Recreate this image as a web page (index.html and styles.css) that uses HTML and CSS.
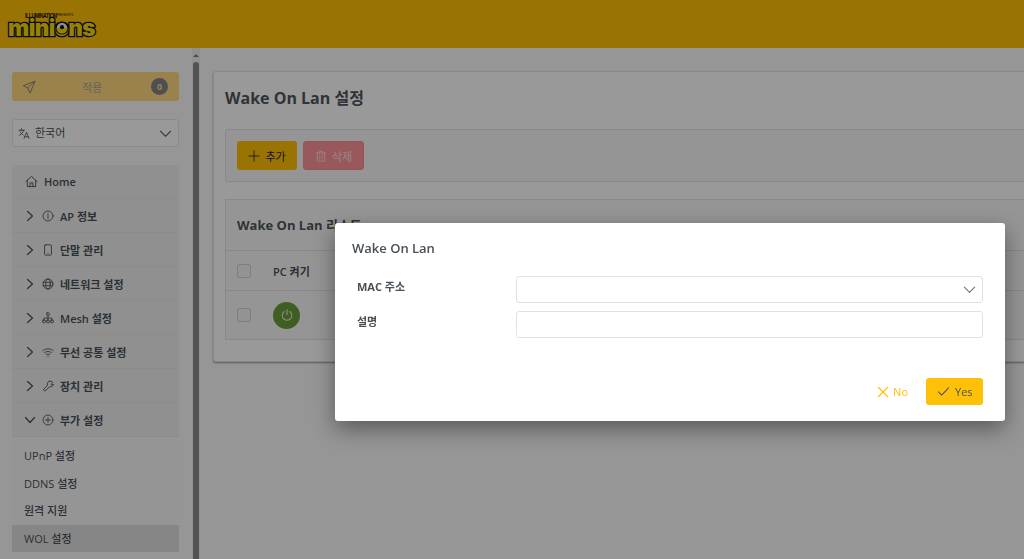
FILE: index.html
```html
<!DOCTYPE html>
<html lang="ko">
<head>
<meta charset="utf-8">
<title>Wake On Lan 설정</title>
<link rel="stylesheet" href="styles.css">
</head>
<body>
<header class="topbar">
  <div class="logo">
    <div class="logo-top"><span class="logo-ill">ILLUMINATION</span><span class="logo-pre">PRESENTS</span></div>
    <div class="logo-name">mini<span class="logo-o">o<svg class="logo-eye" viewBox="0 0 16 16"><circle cx="8" cy="8" r="7.5" fill="#111"/><path d="M1.500 8a6.500 6.500 0 0 0 13 0z" fill="#f5d90a"/><path d="M2 8a6 6 0 0 1 12 0z" fill="#eee"/><circle cx="8" cy="7" r="2.300" fill="#111"/></svg></span>ns</div>
  </div>
</header>
<div class="shell">
  <aside class="sidebar">
    <button class="apply">
      <svg class="ic apply-ic" viewBox="0 0 16 16"><path d="M14.500 1.500 1.500 6.500l5 2.500 2.500 5.500zM6.500 9l8-7.500"/></svg>
      <span class="apply-label">적용</span>
      <span class="apply-badge">0</span>
    </button>
    <div class="lang">
      <svg class="lang-ic" viewBox="0 0 16 16"><path d="M1 4h7M4.300 2v2M6.800 4c-.6 3-2.500 5-5.300 6.200M2.800 6c.8 1.700 2 3 3.700 3.800M7.500 14l3-7.500 3 7.500M8.500 12h4"/></svg>
      <span class="lang-text">한국어</span>
      <svg class="ic lang-chev" viewBox="0 0 14 14"><path d="M1.500 4.500 7 10l5.500-5.500"/></svg>
    </div>
    <nav class="menu">
      <div class="item home">
        <svg class="ic" viewBox="0 0 14 14"><path d="M1 7 7 1.500 13 7M2.500 5.800V12.500h9V5.800M5.500 12.500V8.500h3v4"/></svg>
        <span class="home-label">Home</span>
      </div>
      <div class="item">
        <svg class="chev" viewBox="0 0 10 12"><path d="M2.500 1.500 7.500 6l-5 4.500"/></svg>
        <svg class="ic" viewBox="0 0 14 14"><circle cx="7" cy="7" r="5.800"/><path d="M7 6.200v4M7 3.800v1"/></svg>
        <span>AP 정보</span>
      </div>
      <div class="item">
        <svg class="chev" viewBox="0 0 10 12"><path d="M2.500 1.500 7.500 6l-5 4.500"/></svg>
        <svg class="ic" viewBox="0 0 14 14"><rect x="3" y="1" width="8" height="12" rx="1"/><path d="M6.800 10.800h.5"/></svg>
        <span>단말 관리</span>
      </div>
      <div class="item">
        <svg class="chev" viewBox="0 0 10 12"><path d="M2.500 1.500 7.500 6l-5 4.500"/></svg>
        <svg class="ic" viewBox="0 0 14 14"><circle cx="7" cy="7" r="5.800"/><ellipse cx="7" cy="7" rx="2.600" ry="5.800"/><path d="M1.500 5h11M1.500 9h11"/></svg>
        <span>네트워크 설정</span>
      </div>
      <div class="item">
        <svg class="chev" viewBox="0 0 10 12"><path d="M2.500 1.500 7.500 6l-5 4.500"/></svg>
        <svg class="ic" viewBox="0 0 14 14"><rect x="5.500" y="1" width="3" height="3" rx=".5"/><rect x=".8" y="9.500" width="3" height="3" rx=".5"/><rect x="5.500" y="9.500" width="3" height="3" rx=".5"/><rect x="10.200" y="9.500" width="3" height="3" rx=".5"/><path d="M7 4v5.500M2.300 9.500V7h9.400v2.500"/></svg>
        <span>Mesh 설정</span>
      </div>
      <div class="item">
        <svg class="chev" viewBox="0 0 10 12"><path d="M2.500 1.500 7.500 6l-5 4.500"/></svg>
        <svg class="ic" viewBox="0 0 14 14"><path d="M1 5.500c3.400-3 8.600-3 12 0M3 7.800c2.300-2 5.700-2 8 0M5 10c1.200-1 2.800-1 4 0M6.800 12h.4"/></svg>
        <span>무선 공통 설정</span>
      </div>
      <div class="item">
        <svg class="chev" viewBox="0 0 10 12"><path d="M2.500 1.500 7.500 6l-5 4.500"/></svg>
        <svg class="ic" viewBox="0 0 14 14"><path d="M8.500 1.500a3.500 3.500 0 0 1 4.200 1.200L10.500 5 12 6.200l1.200-1.500a3.500 3.500 0 0 1-4.500 3.300L3.500 13 1.500 11.500 6.300 6A3.500 3.500 0 0 1 8.500 1.500z"/></svg>
        <span>장치 관리</span>
      </div>
      <div class="item">
        <svg class="chev chev-down" viewBox="0 0 12 10"><path d="M1.500 2.500 6 7.500l4.500-5"/></svg>
        <svg class="ic" viewBox="0 0 14 14"><circle cx="7" cy="7" r="5.800"/><path d="M7 4v6M4 7h6"/></svg>
        <span>부가 설정</span>
      </div>
      <div class="subs">
        <div class="sub">UPnP 설정</div>
        <div class="sub">DDNS 설정</div>
        <div class="sub">원격 지원</div>
        <div class="sub current">WOL 설정</div>
      </div>
    </nav>
  </aside>
  <div class="scroller">
    <div class="scroll-arrow"></div>
    <div class="scroll-thumb"></div>
  </div>
  <main class="main">
    <section class="card">
      <h1 class="card-title">Wake On Lan 설정</h1>
      <div class="toolbar">
        <button class="btn btn-add">
          <svg class="btn-ic" viewBox="0 0 14 14"><path d="M7 1v12M1 7h12"/></svg>
          <span>추가</span>
        </button>
        <button class="btn btn-del">
          <svg class="btn-ic" viewBox="0 0 14 14"><path d="M1.500 3.500h11M5 3.500V1.500h4v2M2.800 3.500v9.500h8.400V3.500M5.600 6v4.500M8.400 6v4.500"/></svg>
          <span>삭제</span>
        </button>
      </div>
      <div class="list">
        <h2 class="list-title">Wake On Lan 리스트</h2>
        <div class="row row-head">
          <span class="check"></span>
          <span class="col-pc">PC 켜기</span>
        </div>
        <div class="row row-body">
          <span class="check"></span>
          <span class="power">
            <svg viewBox="0 0 14 14"><path d="M7 1.500v5M4.200 3.500a4.800 4.800 0 1 0 5.600 0"/></svg>
          </span>
        </div>
      </div>
    </section>
  </main>
</div>
<div class="mask"></div>
<div class="dialog">
  <div class="dialog-title">Wake On Lan</div>
  <div class="field">
    <label class="field-label">MAC 주소</label>
    <div class="control">
      <svg class="control-chev" viewBox="0 0 14 14"><path d="M1.500 4.500 7 10l5.500-5.500"/></svg>
    </div>
  </div>
  <div class="field">
    <label class="field-label">설명</label>
    <div class="control"></div>
  </div>
  <div class="dialog-foot">
    <button class="link-no">
      <svg viewBox="0 0 12 12"><path d="M1.500 1.500l9 9M10.500 1.500l-9 9"/></svg>
      <span>No</span>
    </button>
    <button class="btn-yes">
      <svg viewBox="0 0 14 12"><path d="M1.500 6.500 5 10l7.500-8"/></svg>
      <span>Yes</span>
    </button>
  </div>
</div>
</body>
</html>
```

FILE: styles.css
```css
* { box-sizing: border-box; }
html, body { margin: 0; height: 100%; overflow: hidden; }
body {
  font-family: "Open Sans", "Noto Sans CJK KR", sans-serif;
  font-size: 11px;
  color: #495057;
  background: #fbfbfb;
}
button { font-family: inherit; cursor: pointer; }
svg { display: block; fill: none; stroke: currentColor; stroke-linecap: round; stroke-linejoin: round; }

.topbar { height: 48px; background: #ffc107; padding: 12px 0 0 8px; }
.logo { width: 90px; height: 28px; }
.logo-top { display: flex; align-items: flex-end; margin-left: 17px; height: 7px; color: #111; line-height: 7px; }
.logo-ill {
  display: inline-block; margin-right: -8px; transform: scaleX(.8); transform-origin: left center;
  font-family: "Liberation Sans", sans-serif; font-size: 6.500px; font-weight: 700; letter-spacing: -.55px; white-space: nowrap;
}
.logo-pre { font-family: "Liberation Sans", sans-serif; font-size: 3px; letter-spacing: .1px; white-space: nowrap; }
.logo-name {
  font-family: "Inter", sans-serif;
  font-size: 22.500px;
  line-height: 18px;
  font-weight: 900;
  letter-spacing: -.6px;
  white-space: nowrap;
  color: #f5d90a;
  -webkit-text-stroke: 2.500px #111;
  paint-order: stroke fill;
}
.logo-o { position: relative; }
.logo-eye { position: absolute; left: 0; top: 7px; width: 14px; height: 14px; stroke: none; }

.shell { display: flex; height: 511px; }
.sidebar { width: 192px; flex: none; padding: 24px 13px 0 12px; overflow: hidden; background: #fbfbfb; }

.apply {
  display: flex; align-items: center; width: 100%; height: 29px; padding: 0 11px 0 10px;
  border: 0; border-radius: 3px; background: #ffd97d; color: #a9a698; font-size: 11px;
}
.apply-ic { width: 14px; height: 14px; stroke-width: 1; color: #7d7d7d; }
.apply-label { flex: 1; text-align: center; margin-right: 3px; }
.apply-badge {
  width: 17px; height: 17px; border-radius: 50%; background: #80848e; color: #ffd97d;
  font-size: 9px; font-weight: 700; line-height: 17px; text-align: center;
}

.lang {
  display: flex; align-items: center; height: 28px; margin: 18px 0; padding: 0 6px 0 5px;
  background: #fff; border: 1px solid #e6e6e6; border-radius: 3px;
}
.lang-ic { width: 13px; height: 13px; stroke-width: 1; flex: none; }
.lang-text { flex: 1; margin-left: 4px; padding-bottom: 2px; font-size: 11px; }
.lang-chev { width: 13px; height: 13px; stroke-width: 1.100; color: #495057; }

.menu { display: flex; flex-direction: column; background: #f1f1f1; }
.item {
  display: flex; align-items: center; height: 34px; padding-left: 13px; gap: 6px;
  border-bottom: 1px solid #e8e8e8; font-weight: 600; font-size: 11px;
}
.item .ic { width: 12px; height: 12px; stroke-width: 1; flex: none; color: #495057; }
.item.home .ic { width: 13px; height: 13px; }
.chev { width: 10px; height: 12px; stroke-width: 1.200; flex: none; margin-right: 1px; }
.chev-down { width: 12px; height: 10px; margin-left: -1px; margin-right: 0; }
.subs { padding-top: 5px; background: #f9f9f9; }
.sub { height: 27.500px; line-height: 27.500px; padding-left: 12px; font-size: 11px; font-weight: 500; }
.sub.current { background: #e0e0e0; }

.scroller { position: relative; width: 8px; flex: none; background: #f0f0f0; }
.scroll-arrow {
  position: absolute; left: 1px; top: 6px;
  border-left: 3px solid transparent; border-right: 3px solid transparent; border-bottom: 3px solid #808080;
}
.scroll-thumb { position: absolute; left: 1px; top: 14px; bottom: -20px; width: 6px; border-radius: 3px; background: #8a8a8a; }

.main { flex: 1; min-width: 0; padding: 23px 0 0 13px; overflow: hidden; }
.card {
  width: 830px; height: 291px; padding: 0 11px; background: #fff;
  border: 1px solid #e3e3e3; border-radius: 3px; box-shadow: 0 1px 2px rgba(0,0,0,.4);
}
.card-title { margin: 0; height: 57px; line-height: 53px; font-size: 16px; font-weight: 700; color: #50565c; }
.toolbar {
  display: flex; gap: 6px; height: 53px; padding: 11px; margin-bottom: 17px;
  background: #f8f9fa; border: 1px solid #e3e3e3; border-radius: 3px;
}
.btn {
  display: flex; align-items: center; justify-content: center; gap: 5px; height: 29px; padding: 0;
  border: 0; border-radius: 3px; font-size: 11px; white-space: nowrap;
}
.btn-ic { width: 12px; height: 12px; stroke-width: 1; }
.btn-add { width: 60px; background: #ffc107; color: #212529; }
.btn-del { width: 61px; background: #ff9399; color: #ffe0e0; border: 1px solid #fb8c93; }
.list { background: #f8f9fa; border: 1px solid #e3e3e3; }
.list-title { margin: 0; height: 50px; line-height: 50px; padding-left: 11px; font-size: 13px; font-weight: 700; color: #50565c; }
.row { display: flex; align-items: center; padding-left: 11px; border-top: 1px solid #e3e3e3; }
.row-head { height: 40px; font-weight: 600; font-size: 11px; }
.row-body { height: 49px; background: #f8f9fa; }
.check { width: 14px; height: 14px; background: #f5f5f5; border: 1px solid #ced4da; border-radius: 2px; flex: none; }
.col-pc { margin-left: 22px; }
.power {
  display: flex; align-items: center; justify-content: center; width: 27px; height: 27px; margin-left: 22px;
  border-radius: 50%; background: #689f38; color: #e4f0d8;
}
.power svg { width: 14px; height: 14px; stroke-width: 1.100; }

.mask { position: fixed; inset: 0; background: rgba(0,0,0,.4); }
.dialog {
  position: absolute; left: 335px; top: 223px; width: 670px; height: 198px; padding: 0 22px 0 17px;
  background: #fff; border-radius: 3px; box-shadow: 0 8px 22px rgba(0,0,0,.4);
}
.dialog-title { height: 41px; padding-top: 15px; line-height: 20px; font-size: 13px; font-weight: 600; color: #495057; margin-bottom: 12px; }
.field { display: flex; align-items: center; margin-bottom: 8px; }
.field-label { width: 164px; padding: 0 0 8px 5px; font-size: 11px; font-weight: 700; color: #495057; }
.control {
  display: flex; align-items: center; justify-content: flex-end; flex: 1; height: 27px; padding-right: 6px;
  border: 1px solid #dee2e6; border-radius: 3px; background: #fff;
}
.control-chev { width: 13px; height: 13px; stroke-width: 1.200; color: #6c757d; }
.dialog-foot { display: flex; justify-content: flex-end; align-items: center; gap: 18px; margin-top: 40px; }
.link-no { display: flex; align-items: center; gap: 4px; padding: 0; border: 0; background: none; color: #ffc107; font-size: 11px; }
.link-no svg { width: 12px; height: 12px; stroke-width: 1.200; }
.btn-yes {
  display: flex; align-items: center; gap: 5px; width: 57px; height: 27px; padding: 0 0 0 11px;
  border: 0; border-radius: 3px; background: #ffc107; color: #495057; font-size: 11px;
}
.btn-yes svg { width: 13px; height: 11px; stroke-width: 1.100; }
```
